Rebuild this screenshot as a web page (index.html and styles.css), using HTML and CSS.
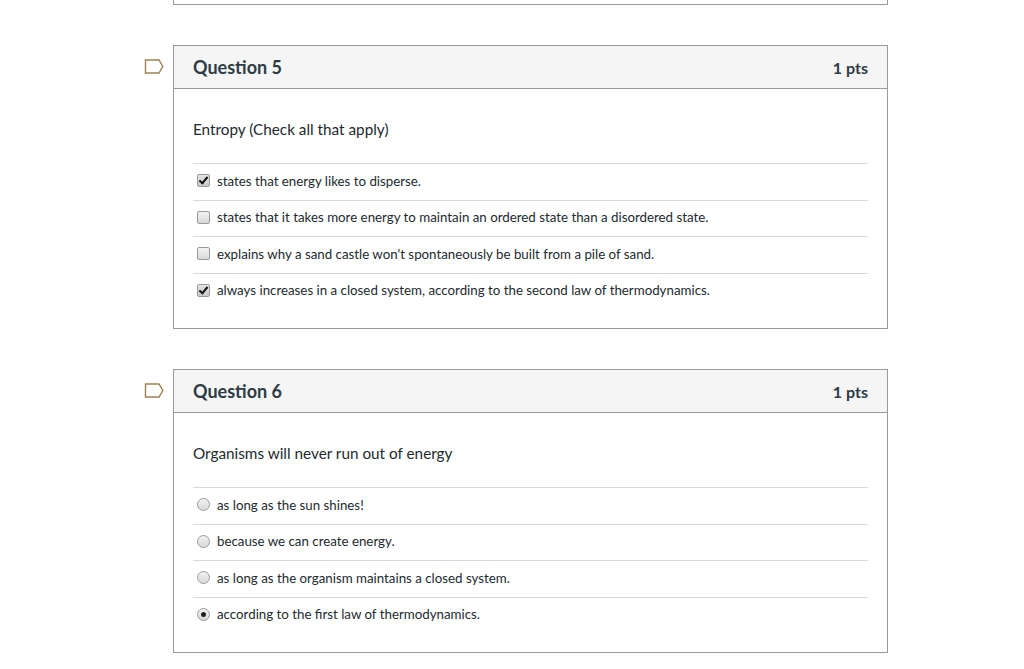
FILE: index.html
```html
<!DOCTYPE html>
<html lang="en">
<head>
  <meta charset="UTF-8">
  <title>Quiz</title>
  <link rel="stylesheet" href="styles.css">
</head>
<body>
  <div class="quiz">
    <div class="question prev"></div>

    <div class="question-row">
      <div class="flag-col">
        <svg class="flag" width="20" height="15" viewBox="0 0 20 15">
          <path d="M1.5 1 H15 L18.8 7.5 L15 14 H1.5 Z" fill="none" stroke="#9c8150" stroke-width="1.4"/>
        </svg>
      </div>
      <div class="question">
        <div class="question-header">
          <span class="question-name">Question 5</span>
          <span class="question-points">1 pts</span>
        </div>
        <div class="question-body">
          <div class="question-text">Entropy (Check all that apply)</div>
          <div class="answers">
            <label class="answer"><span class="checkbox checked"></span>states that energy likes to disperse.</label>
            <label class="answer"><span class="checkbox"></span>states that it takes more energy to maintain an ordered state than a disordered state.</label>
            <label class="answer"><span class="checkbox"></span>explains why a sand castle won't spontaneously be built from a pile of sand.</label>
            <label class="answer"><span class="checkbox checked"></span>always increases in a closed system, according to the second law of thermodynamics.</label>
          </div>
        </div>
      </div>
    </div>

    <div class="question-row">
      <div class="flag-col">
        <svg class="flag" width="20" height="15" viewBox="0 0 20 15">
          <path d="M1.5 1 H15 L18.8 7.5 L15 14 H1.5 Z" fill="none" stroke="#9c8150" stroke-width="1.4"/>
        </svg>
      </div>
      <div class="question">
        <div class="question-header">
          <span class="question-name">Question 6</span>
          <span class="question-points">1 pts</span>
        </div>
        <div class="question-body">
          <div class="question-text">Organisms will never run out of energy</div>
          <div class="answers">
            <label class="answer"><span class="radio"></span>as long as the sun shines!</label>
            <label class="answer"><span class="radio"></span>because we can create energy.</label>
            <label class="answer"><span class="radio"></span>as long as the organism maintains a closed system.</label>
            <label class="answer"><span class="radio selected"></span>according to the first law of thermodynamics.</label>
          </div>
        </div>
      </div>
    </div>
  </div>
</body>
</html>
```

FILE: styles.css
```css
body {
  margin: 0;
  background: #ffffff;
  font-family: Lato, "Open Sans", sans-serif;
  color: #2d3b45;
}

.quiz {
  display: flex;
  flex-direction: column;
  gap: 40px;
  padding-left: 144px;
}

.question-row {
  display: flex;
  align-items: flex-start;
}

.flag-col {
  width: 29px;
  padding-top: 14px;
}

.flag {
  display: block;
}

.question {
  width: 713px;
  border: 1px solid #9a9a9a;
}

.question.prev {
  height: 4px;
  border-top: none;
  margin-left: 29px;
}

.question-header {
  display: flex;
  justify-content: space-between;
  align-items: center;
  height: 42px;
  padding: 0 19px;
  background: #f5f5f5;
  border-bottom: 1px solid #9a9a9a;
}

.question-name {
  font-size: 18px;
  font-weight: bold;
}

.question-points {
  font-size: 16px;
  font-weight: bold;
}

.question-body {
  padding: 30px 19px 19px;
}

.question-text {
  font-size: 15.3px;
  line-height: 20px;
  margin-bottom: 24px;
  color: #222a30;
}

.answer {
  display: flex;
  align-items: center;
  gap: 7px;
  height: 33.5px;
  padding: 0 0 2px 4px;
  border-top: 1px solid #d8d8d8;
  font-size: 13.3px;
  color: #222a30;
}

.checkbox,
.radio {
  width: 11px;
  height: 11px;
  border: 1px solid #9b9b9b;
  background: linear-gradient(#f2f2f2, #d9d9d9);
  position: relative;
  flex-shrink: 0;
}

.checkbox {
  border-radius: 2px;
}

.checkbox.checked {
  background: linear-gradient(#e4e4e4, #c8c8c8);
}

.checkbox.checked::after {
  content: "";
  position: absolute;
  left: 3px;
  top: 0px;
  width: 3px;
  height: 7px;
  border: solid #111;
  border-width: 0 2px 2px 0;
  transform: rotate(40deg);
}

.radio {
  border-radius: 50%;
}

.radio.selected::after {
  content: "";
  position: absolute;
  left: 3px;
  top: 3px;
  width: 5px;
  height: 5px;
  border-radius: 50%;
  background: #222;
}
```
